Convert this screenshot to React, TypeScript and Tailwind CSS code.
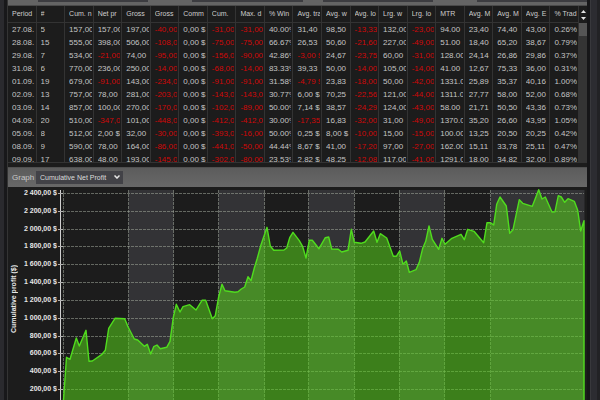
import { useState } from "react"

const columns = [
  "Period", "#", "Cum. n", "Net pr", "Gross", "Gross", "Comm", "Cum.", "Max. d", "% Win",
  "Avg. tra", "Avg. w", "Avg. lo", "Lrg. w", "Lrg. lo", "MTR", "Avg. M", "Avg. M", "Avg. E", "% Trad",
]

const rows = [
  ["27.08.", "5", "157,00", "157,00", "197,00", "-40,00", "0,00 $", "-31,00", "-31,00", "40.00%", "31,40", "98,50", "-13,33", "132,00", "-23,00", "94.00", "23,40", "74,40", "43,00", "0.26%"],
  ["28.08.", "15", "555,00", "398,00", "506,00", "-108,0", "0,00 $", "-75,00", "-75,00", "66.67%", "26,53", "50,60", "-21,60", "227,00", "-49,00", "51.00", "18,40", "65,20", "38,67", "0.79%"],
  ["29.08.", "7", "534,00", "-21,00", "74,00", "-95,00", "0,00 $", "-156,0", "-90,00", "42.86%", "-3,00 $", "24,67", "-23,75", "60,00", "-31,00", "128.00", "24,14", "26,86", "29,86", "0.37%"],
  ["31.08.", "6", "770,00", "236,00", "250,00", "-14,00", "0,00 $", "-68,00", "-14,00", "83.33%", "39,33", "50,00", "-14,00", "105,00", "-14,00", "41.00", "12,67", "75,33", "36,00", "0.31%"],
  ["01.09.", "19", "679,00", "-91,00", "143,00", "-234,0", "0,00 $", "-91,00", "-91,00", "31.58%", "-4,79 $", "23,83", "-18,00", "50,00", "-42,00", "1331.0", "25,89", "35,37", "40,16", "1.00%"],
  ["02.09.", "13", "757,00", "78,00", "281,00", "-203,0", "0,00 $", "-143,0", "-143,0", "30.77%", "6,00 $", "70,25", "-22,56", "121,00", "-44,00", "1311.0", "27,77", "58,00", "52,00", "0.68%"],
  ["03.09.", "14", "857,00", "100,00", "270,00", "-170,0", "0,00 $", "-102,0", "-89,00", "50.00%", "7,14 $", "38,57", "-24,29", "124,00", "-43,00", "58.00", "21,71", "50,50", "43,36", "0.73%"],
  ["04.09.", "20", "510,00", "-347,0", "101,00", "-448,0", "0,00 $", "-412,0", "-412,0", "30.00%", "-17,35", "16,83", "-32,00", "31,00", "-49,00", "1370.0", "35,20", "26,60", "43,95", "1.05%"],
  ["05.09.", "8", "512,00", "2,00 $", "32,00", "-30,00", "0,00 $", "-393,0", "-16,00", "50.00%", "0,25 $", "8,00 $", "-10,00", "15,00", "-15,00", "100.00", "13,25", "20,50", "20,25", "0.42%"],
  ["08.09.", "9", "590,00", "78,00", "164,00", "-86,00", "0,00 $", "-441,0", "-50,00", "44.44%", "8,67 $", "41,00", "-17,20", "97,00", "-27,00", "162.00", "15,11", "33,78", "25,11", "0.47%"],
  ["09.09.", "17", "638,00", "48,00", "193,00", "-145,0", "0,00 $", "-302,0", "-80,00", "23.53%", "2,82 $", "48,25", "-12,08", "117,00", "-41,00", "1291.0", "18,00", "34,82", "32,00", "0.89%"],
]

const yLabels = [
  "2 400,00 $", "2 200,00 $", "2 000,00 $", "1 800,00 $", "1 600,00 $", "1 400,00 $",
  "1 200,00 $", "1 000,00 $", "800,00 $", "600,00 $", "400,00 $", "200,00 $",
]

// x position of every week boundary, the odd ones start a lighter band
const weeks = [63.5, 128.5, 173.5, 218.5, 264.5, 308.5, 354.5, 399.5, 444.5, 490.5, 584.5]
const gridStep = 17.82

const profitLine =
  "63.5,400 66.5,357.3 70,359.3 76.3,338 79.3,346 86,330.3 89,361.3 92.3,361 102,354.3 105.3,350.3 108.7,328.3 115,318.3 " +
  "124.7,318.7 128,326.7 134.3,339 137.7,340 144.3,346.3 147.3,344.3 150.7,354 153.7,346.7 157,345 160.3,348.7 166.7,347.3 " +
  "170,341.3 173.3,317.3 176.3,304.3 180,312 183,306.7 189.7,304.7 196,310 202,300.3 205.7,300.3 212.3,318.7 215.3,315.7 " +
  "218.7,296.7 222,284.3 225,290.7 235,292.3 238,291.7 241.3,289 244.7,287 248,276.7 251,280.7 254.3,268 257.3,258.3 " +
  "260.7,245.7 267,227.3 270.3,246 273.7,250.3 284,250 286.7,248 289.7,237.7 293,232.3 299.3,240.7 302.7,246.7 306,258 " +
  "309.3,240.3 312.3,240.3 319,248.7 325.3,237.7 328.7,237 331.7,249 338.3,249.3 341.7,252 348,250.3 351.3,229.3 " +
  "354.3,242.3 361,243.3 365,242 373.7,231 377,242.3 380.3,233.7 386.7,238 393.3,256.3 396.3,256.3 399.7,251 403,264.3 " +
  "406.3,261 409.3,272.3 416,269.7 419.3,262.3 422.7,248.3 425.7,241.3 429,226 432.3,239.3 438.7,249.3 442,238.3 " +
  "445,244.3 451.3,238.7 461,234.3 464.3,239.7 467.7,229.3 474,231.3 483.7,242.7 487,222.7 490.3,222.7 493.7,225 " +
  "496.7,204.3 500,197 506.3,206 509.7,233.3 513,229.7 519.3,199.7 522.7,203.3 532.3,206.3 538.7,189.7 542,199 " +
  "545.3,197 552,212 555,211.7 558.3,195.7 561.3,197 564.7,202.3 568,198.7 574.3,201.3 577.7,210.3 580.7,231 584,220.7 584,400"

function TradesTable() {
  return (
    <div className="flex h-[157px] overflow-hidden border-b border-[#333333]">
      <div className="min-w-0 flex-1">
        <table className="w-full table-fixed border-separate border-spacing-0 text-left text-[8px] leading-[12px]">
          <thead>
            <tr className="h-[17px]">
              {columns.map((name, i) => (
                <th key={i} className="border-r border-b border-[#333333] p-0 pl-1 text-[7px] font-normal text-[#cccccc]">
                  <div className="mr-px overflow-hidden whitespace-nowrap">{name}</div>
                </th>
              ))}
            </tr>
          </thead>
          <tbody>
            {rows.map((row) => (
              <tr key={row[0]} className="h-[13px]">
                {row.map((cell, i) => (
                  <td
                    key={i}
                    className={`border-r border-[#333333] p-0 pl-1 ${cell.startsWith("-") ? "text-[#d00808]" : "text-[#c4c4c4]"}`}
                  >
                    <div className="mr-px overflow-hidden whitespace-nowrap">{cell}</div>
                  </td>
                ))}
              </tr>
            ))}
          </tbody>
        </table>
      </div>

      {/* scroll bar */}
      <div className="flex w-2 flex-col bg-[#343434]">
        <div className="flex h-[17px] flex-col items-center justify-center gap-1 bg-[#1c1c1c]">
          <svg viewBox="0 0 5 3" className="h-[3px] w-[5px]" fill="#e4e4e4"><path d="M0 3L2.5 0L5 3Z" /></svg>
          <svg viewBox="0 0 5 3" className="h-[3px] w-[5px]" fill="#e4e4e4"><path d="M0 0L2.5 3L5 0Z" /></svg>
        </div>
        <div className="h-[13px] bg-[#555555]" />
      </div>
    </div>
  )
}

function ProfitChart() {
  return (
    <div className="flex min-h-0 flex-1 overflow-hidden bg-[#1c1c1c] font-bold text-[#e6e6e6]">
      <div className="flex w-3 items-center justify-center pt-3">
        <span className="rotate-180 whitespace-nowrap text-[7px] leading-[10px] [writing-mode:vertical-rl]">
          Cumulative profit ($)
        </span>
      </div>
      <div className="mt-px flex h-[206px] w-[37px] flex-col justify-between text-right text-[7px] leading-[10px]">
        {yLabels.map((label) => (
          <span key={label} className="whitespace-nowrap">{label}</span>
        ))}
      </div>
      <svg viewBox="58 187 529 213" preserveAspectRatio="none" className="ml-px h-[213px] min-w-0 flex-1">
        {weeks.slice(0, -1).map((x, i) =>
          i % 2 === 1 ? (
            <rect key={x} x={x} y="190" width={weeks[i + 1] - x} height="210" fill="#333336" />
          ) : null
        )}
        <g stroke="#a0a89a" strokeOpacity="0.55" strokeDasharray="3 1">
          {yLabels.map((label, i) => (
            <path key={label} d={`M63 ${Math.round(193 + i * gridStep) + 0.5}H584`} />
          ))}
          {weeks.slice(0, -1).map((x) => (
            <path key={x} d={`M${x} 190V400`} />
          ))}
        </g>
        <polygon points={profitLine} fill="#58d21c" fillOpacity="0.55" />
        <polyline points={profitLine} fill="none" stroke="#50dc1e" strokeWidth="1.4" strokeLinejoin="round" />
        <path d="M60.5 190V400" stroke="#d0d0d0" />
        {yLabels.map((label, i) => (
          <path key={label} d={`M58 ${Math.round(193 + i * gridStep) + 0.5}h5`} stroke="#b0b0b0" />
        ))}
      </svg>
    </div>
  )
}

export default function App() {
  const [graph, setGraph] = useState("Cumulative Net Profit")

  return (
    <div className="flex h-screen overflow-hidden bg-[#18181a] font-['Liberation_Sans',Arial,sans-serif]">
      <div className="w-1 bg-[#2a2a2e]" />

      <main className="ml-[3px] flex min-w-0 flex-1 flex-col border-l border-[#343434] bg-[#1c1c1c]">
        {/* lower edge of the filter bar */}
        <div className="flex h-[6px] items-start border-b border-[#4a4a4a] bg-[#646464] pl-[30px]">
          <div className="h-[2px] flex-[110] bg-[#3c3c40]" />
          <div className="h-[2px] flex-[44]" />
          <div className="h-[2px] flex-[111] bg-[#3c3c40]" />
          <div className="h-[2px] flex-[20]" />
          <div className="h-[2px] flex-[110] bg-[#3c3c40]" />
          <div className="h-[2px] flex-[44]" />
          <div className="h-[2px] flex-[110] bg-[#3c3c40]" />
        </div>

        <TradesTable />

        <div className="mt-1 flex h-5 items-center border-t border-[#505050] bg-linear-to-b from-[#5c5c5c] to-[#686868] pl-1 text-[8px]">
          <label htmlFor="graph" className="w-6 text-[#c8c8c8]">Graph</label>
          <div className="relative">
            <select
              id="graph"
              value={graph}
              onChange={(e) => setGraph(e.target.value)}
              className="block h-[13px] w-[87px] appearance-none bg-[#424247] pl-1 text-[7px] leading-[13px] text-[#dcdcdc] outline-none"
            >
              <option>Cumulative Net Profit</option>
              <option>Net Profit</option>
              <option>Cumulative Max. Drawdown</option>
            </select>
            <svg viewBox="0 0 6 4" className="pointer-events-none absolute top-1 right-[3px] h-1 w-[6px]" fill="none" stroke="#e6e6e6" strokeWidth="1.5">
              <path d="M0.5 0.5L3 3L5.5 0.5" />
            </svg>
          </div>
        </div>

        <ProfitChart />
      </main>

      <div className="w-[3px] bg-[#161618]" />
      <div className="w-[7px] border-l border-[#38383c] bg-[#2c2c31]" />
      <div className="w-[3px] bg-[#222225]" />
    </div>
  )
}
